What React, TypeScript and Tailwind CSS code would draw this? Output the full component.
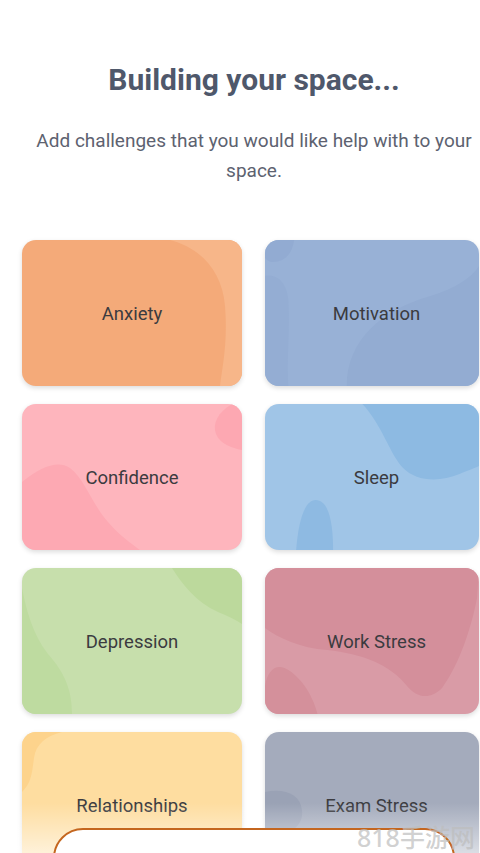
import React from 'react';

interface Challenge {
    label: string;
    base: string;
    blobs: { d: string; fill: string }[];
}

// Card background blobs are drawn in a 220x146 box and stretched to the card
const challenges: Challenge[] = [
    {
        label: 'Anxiety',
        base: 'bg-[#f4aa79]',
        blobs: [
            { d: 'M148 0 C178 8 200 30 203 66 C206 104 200 128 198 146 L220 146 L220 0 Z', fill: '#f7b689' },
        ],
    },
    {
        label: 'Motivation',
        base: 'bg-[#98b1d6]',
        blobs: [
            { d: 'M0 0 L30 0 C28 14 20 22 8 22 C4 22 2 20 0 18 Z', fill: '#92abd2' },
            { d: 'M0 36 C8 34 22 38 24 60 C26 90 22 120 24 146 L0 146 Z', fill: '#94add3' },
            { d: 'M84 146 C84 100 120 70 170 56 C196 48 212 38 220 26 L220 146 Z', fill: '#93acd2' },
        ],
    },
    {
        label: 'Confidence',
        base: 'bg-[#feb5bd]',
        blobs: [
            { d: 'M220 0 L210 0 C196 8 190 20 194 30 C198 40 210 44 220 46 Z', fill: '#fda8b2' },
            { d: 'M0 78 C20 62 36 56 48 64 C62 74 70 100 86 118 C98 132 110 140 118 146 L0 146 Z', fill: '#fda9b3' },
        ],
    },
    {
        label: 'Sleep',
        base: 'bg-[#a0c5e7]',
        blobs: [
            { d: 'M100 0 C120 20 128 50 142 64 C156 78 180 78 200 70 C210 66 216 64 220 62 L220 0 Z', fill: '#8dbae2' },
            { d: 'M32 146 C34 120 40 96 52 96 C66 96 70 120 70 146 Z', fill: '#8ebae2' },
        ],
    },
    {
        label: 'Depression',
        base: 'bg-[#c7dfac]',
        blobs: [
            { d: 'M150 0 C160 16 174 34 196 44 C206 48 214 52 220 56 L220 0 Z', fill: '#bcd99c' },
            { d: 'M0 20 C4 40 10 66 26 86 C44 106 50 124 50 146 L0 146 Z', fill: '#bedba0' },
        ],
    },
    {
        label: 'Work Stress',
        base: 'bg-[#d99ba6]',
        blobs: [
            { d: 'M0 0 L220 0 L218 30 C212 60 200 96 182 120 C170 132 156 130 146 118 C128 96 100 86 64 82 C36 80 14 70 0 60 Z', fill: '#d48f9b' },
            { d: 'M0 146 L0 118 C2 104 10 96 20 100 C34 106 48 124 54 146 Z', fill: '#d4909b' },
        ],
    },
    {
        label: 'Relationships',
        base: 'bg-[#fedda0]',
        blobs: [
            { d: 'M0 0 L40 0 C24 4 14 12 12 26 C10 40 10 50 0 60 Z', fill: '#fdd38c' },
            { d: 'M130 146 C140 110 170 100 220 98 L220 146 Z', fill: '#fdd28a' },
        ],
    },
    {
        label: 'Exam Stress',
        base: 'bg-[#a4abbc]',
        blobs: [
            { d: 'M0 60 C20 56 36 62 38 78 C40 94 26 104 0 104 Z', fill: '#9aa2b5' },
        ],
    },
];

const ChallengeCard: React.FC<{ challenge: Challenge; right: boolean }> = ({ challenge, right }) => (
    <div className={`relative h-[146px] rounded-[14px] overflow-hidden shadow-[0_2px_5px_rgba(0,0,0,0.14)] ${challenge.base}`}>
        <svg className="absolute inset-0 w-full h-full" viewBox="0 0 220 146" preserveAspectRatio="none">
            {challenge.blobs.map((b, i) => (
                <path key={i} d={b.d} fill={b.fill} />
            ))}
        </svg>
        <div className={`relative h-full pt-[4px] flex items-center justify-center text-[18.5px] text-[#3b3b3f] ${right ? 'pl-[9px]' : ''}`}>
            {challenge.label}
        </div>
    </div>
);

export default function App() {
    return (
        <div className="relative h-[853px] w-[480px] overflow-hidden bg-white font-['Roboto',sans-serif]">
            {/* Header */}
            <div className="pt-[62px] pl-[30px] pr-[2px] text-center">
                <h1 className="text-[30px] leading-[36px] font-bold text-[#4f586b]">Building your space...</h1>
                <p className="mt-[28px] text-[19px] leading-[30px] text-[#5d6270]">
                    Add challenges that you would like help with to your space.
                </p>
            </div>

            {/* Cards */}
            <div className="mt-[54px] pl-[22px] grid grid-cols-[220px_214px] gap-x-[23px] gap-y-[18px]">
                {challenges.map((c, i) => (
                    <ChallengeCard key={c.label} challenge={c} right={i % 2 === 1} />
                ))}
            </div>

            {/* Bottom fade */}
            <div className="absolute left-0 right-0 bottom-0 h-[50px] bg-gradient-to-b from-white/0 to-white/60" />

            {/* Maybe later button */}
            <button className="absolute left-[53px] right-[25px] top-[828px] h-[60px] rounded-full border-2 border-[#c4661f] bg-white pt-[18px] text-[17px] font-medium tracking-[0.08em] text-[#d06a1f] flex justify-center items-start">
                MAYBE LATER
            </button>

            {/* Watermark */}
            <div className="absolute left-[357px] top-[822px] text-[25px] font-medium leading-[30px] text-[#bdbdbd]/70 font-['Noto_Sans','Noto_Sans_CJK_SC',sans-serif]">
                818手游网
            </div>
        </div>
    );
}
